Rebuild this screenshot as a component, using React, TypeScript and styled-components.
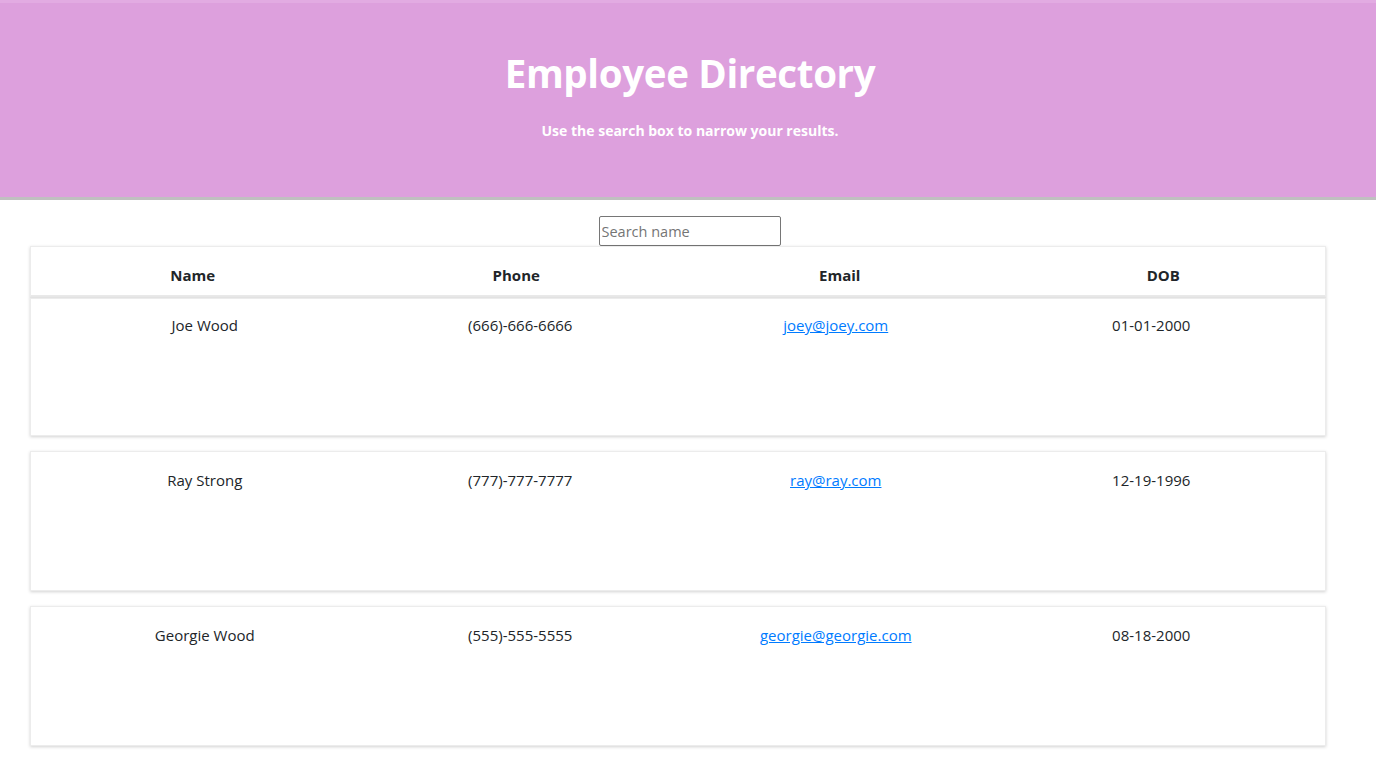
import React, { useState } from "react";
import styled, { createGlobalStyle } from "styled-components";

const GlobalStyle = createGlobalStyle`
  html, body { margin: 0; padding: 0; background: #fff; }
  body {
    font-family: "Open Sans", "Noto Sans", "Liberation Sans", sans-serif;
    color: #212529;
    font-size: 16px;
    line-height: 1.5;
  }
  * { box-sizing: border-box; }
`;

const Header = styled.header`
  background: #dda0dd;
  border-top: 3px solid #e2abe2;
  border-bottom: 3px solid #c0c0c0;
  height: 200px;
  display: flex;
  flex-direction: column;
  align-items: center;
  padding: 42px 0 0 4px;
  color: #fff;
`;

const Title = styled.h1`
  margin: 0;
  font-size: 38.5px;
  font-weight: 700;
  line-height: 56px;
  letter-spacing: -0.35px;
`;

const Subtitle = styled.p`
  margin: 20px 0 0;
  font-size: 14px;
  font-weight: 700;
  line-height: 20px;
`;

const SearchRow = styled.div`
  display: flex;
  justify-content: center;
  padding-top: 16px;
  padding-left: 3px;
`;

const SearchInput = styled.input`
  width: 182px;
  height: 30px;
  border: 1px solid #767676;
  border-radius: 2px;
  padding: 1px 2px;
  font-family: inherit;
  font-size: 14.5px;
  color: #212529;
  &::placeholder { color: #757575; }
`;

const Table = styled.div`
  margin: 0 50px 20px 30px;
  display: flex;
  flex-direction: column;
`;

const Card = styled.div`
  background: #fff;
  border: 1px solid #ececec;
  box-shadow: 0 1px 3px rgba(0, 0, 0, 0.18);
`;

const HeadCard = styled(Card)`
  display: grid;
  grid-template-columns: repeat(4, 1fr);
  height: 52px;
  border-bottom: 3px solid #e9e9e9;
`;

const HeadCell = styled.div`
  text-align: center;
  font-weight: 700;
  font-size: 15px;
  padding-top: 17px;
`;

const RowCard = styled(Card)<{ $first?: boolean }>`
  display: grid;
  grid-template-columns: repeat(4, 1fr);
  padding: ${(p) => (p.$first ? 14 : 16)}px 16px 0;
  height: ${(p) => (p.$first ? 138 : 140)}px;
  margin-top: ${(p) => (p.$first ? 0 : 15)}px;
`;

const Cell = styled.div`
  text-align: center;
  font-size: 15px;
  line-height: 24px;
`;

const EmailLink = styled.a`
  color: #007bff;
  text-decoration: underline;
`;

const employees = [
  { name: "Joe Wood", phone: "(666)-666-6666", email: "joey@joey.com", dob: "01-01-2000" },
  { name: "Ray Strong", phone: "(777)-777-7777", email: "ray@ray.com", dob: "12-19-1996" },
  { name: "Georgie Wood", phone: "(555)-555-5555", email: "georgie@georgie.com", dob: "08-18-2000" },
];

export default function App() {
  const [q, setQ] = useState("");
  const list = employees.filter((e) => e.name.toLowerCase().includes(q.toLowerCase()));
  return (
    <>
      <GlobalStyle />
      <Header>
        <Title>Employee Directory</Title>
        <Subtitle>Use the search box to narrow your results.</Subtitle>
      </Header>
      <SearchRow>
        <SearchInput placeholder="Search name" value={q} onChange={(e) => setQ(e.target.value)} />
      </SearchRow>
      <Table>
        <HeadCard>
          <HeadCell>Name</HeadCell>
          <HeadCell>Phone</HeadCell>
          <HeadCell>Email</HeadCell>
          <HeadCell>DOB</HeadCell>
        </HeadCard>
        {list.map((e, i) => (
          <RowCard key={e.email} $first={i === 0}>
            <Cell>{e.name}</Cell>
            <Cell>{e.phone}</Cell>
            <Cell>
              <EmailLink href={`mailto:${e.email}`}>{e.email}</EmailLink>
            </Cell>
            <Cell>{e.dob}</Cell>
          </RowCard>
        ))}
      </Table>
    </>
  );
}
